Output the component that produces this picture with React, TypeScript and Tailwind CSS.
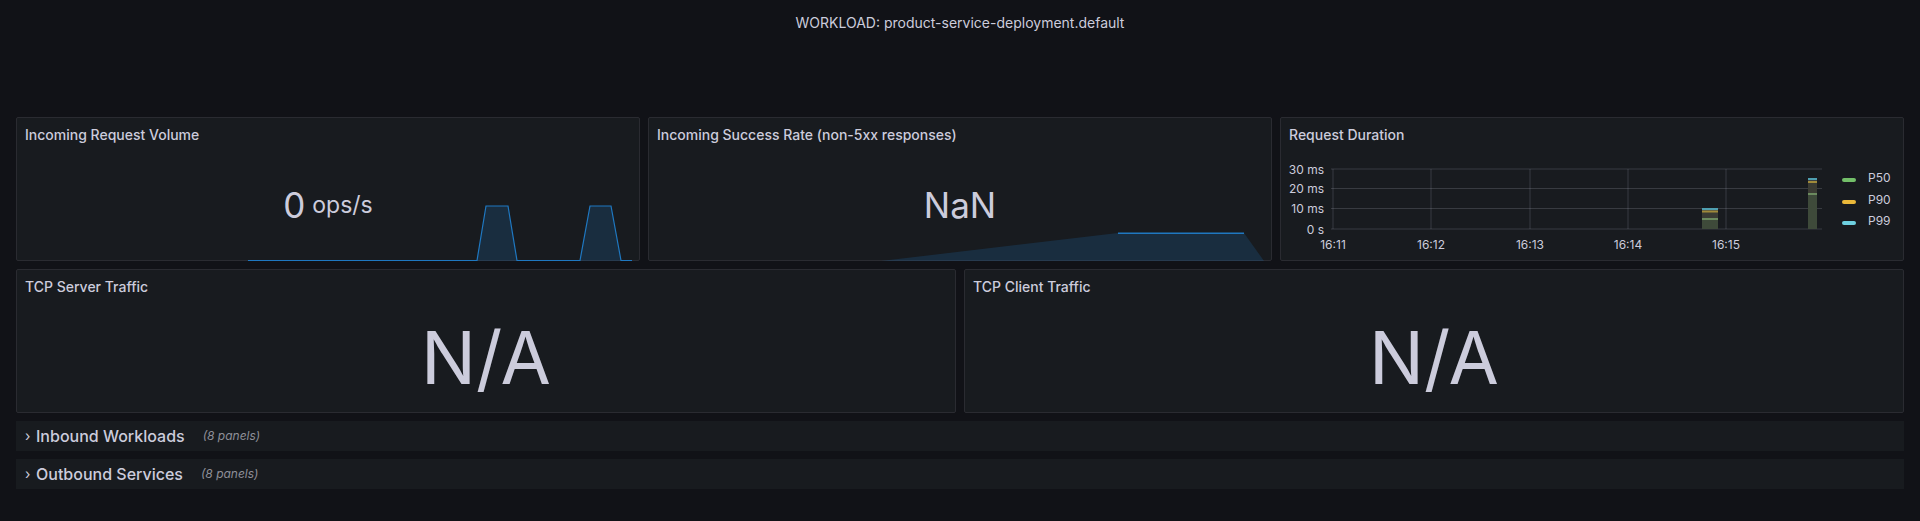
import React from "react";

const TXT = "#ccccdc";

function Panel({ title, className = "", children }: { title: string; className?: string; children?: React.ReactNode }) {
  return (
    <div className={`relative flex flex-col rounded-[2px] border border-[#2a2b31] bg-[#181b1f] ${className}`}>
      <div className="flex h-8 shrink-0 items-center px-2 text-[14px] font-medium text-[#ccccdc]">{title}</div>
      <div className="relative flex-1">{children}</div>
    </div>
  );
}

function Sparkline1() {
  const pts = "231,110.5 460,110.5 469,56 491,56 500,110.5 563,110.5 573,56 594,56 604,110.5 615,110.5";
  return (
    <svg className="absolute left-0 top-0" width={622} height={111} viewBox="0 0 622 111">
      <polygon points={`${pts} 615,111 231,111`} fill="rgba(31,120,193,0.2)" />
      <polyline points={pts} fill="none" stroke="#1f78c1" strokeWidth={1.2} />
    </svg>
  );
}

function Sparkline2() {
  return (
    <svg className="absolute left-0 top-0" width={622} height={111} viewBox="0 0 622 111">
      <polygon points="232,111 469,83 595,83 615,111" fill="rgba(31,120,193,0.2)" />
      <line x1={469} y1={83.3} x2={595} y2={83.3} stroke="#1f78c1" strokeWidth={1.5} />
    </svg>
  );
}

function DurationChart() {
  const ys = [
    { y: 19, l: "30 ms" },
    { y: 38.5, l: "20 ms" },
    { y: 58.5, l: "10 ms" },
    { y: 79, l: "0 s" },
  ];
  const xs = [
    { x: 52, l: "16:11" },
    { x: 150, l: "16:12" },
    { x: 249, l: "16:13" },
    { x: 347, l: "16:14" },
    { x: 445, l: "16:15" },
  ];
  const legend = [
    { y: 30, l: "P50", c: "#73bf69" },
    { y: 52, l: "P90", c: "#eab839" },
    { y: 73, l: "P99", c: "#6ed0e0" },
  ];
  const grid = "rgba(204,204,220,0.18)";
  return (
    <svg className="absolute left-0 top-0" width={622} height={111} viewBox="0 0 622 111" fontFamily="Inter, 'Noto Sans', sans-serif">
      {ys.map((t) => (
        <g key={t.l}>
          <line x1={50} x2={541} y1={t.y} y2={t.y} stroke={grid} strokeWidth={1} />
          <text x={43} y={t.y} textAnchor="end" dominantBaseline="central" fontSize={12} fill={TXT}>
            {t.l}
          </text>
        </g>
      ))}
      {xs.map((t) => (
        <g key={t.l}>
          <line x1={t.x} x2={t.x} y1={19} y2={79} stroke={grid} strokeWidth={1} />
          <text x={t.x} y={94} textAnchor="middle" dominantBaseline="central" fontSize={12} fill={TXT}>
            {t.l}
          </text>
        </g>
      ))}
      {/* bar 1 */}
      <rect x={421} y={58.7} width={16} height={2.3} fill="#3b4143" />
      <rect x={421} y={61} width={16} height={7.7} fill="#3b3c34" />
      <rect x={421} y={68.7} width={16} height={10.3} fill="#3e4a3a" />
      <rect x={421} y={58} width={16} height={2} fill="#4f9fb0" />
      <rect x={421} y={60.5} width={16} height={2} fill="#a08a3a" />
      <rect x={421} y={68} width={16} height={2} fill="#6b8a5e" />
      {/* bar 2 */}
      <rect x={527} y={28.7} width={9} height={3} fill="#3b4143" />
      <rect x={527} y={31.7} width={9} height={12} fill="#3b3c34" />
      <rect x={527} y={43.7} width={9} height={35.3} fill="#3e4a3a" />
      <rect x={527} y={28} width={9} height={2} fill="#4f9fb0" />
      <rect x={527} y={31} width={9} height={2} fill="#a08a3a" />
      <rect x={527} y={43} width={9} height={2} fill="#6b8a5e" />
      {legend.map((g) => (
        <g key={g.l}>
          <rect x={561} y={g.y - 2} width={14} height={4} rx={2} fill={g.c} />
          <text x={587} y={g.y - 3} dominantBaseline="central" fontSize={12} fill={TXT}>
            {g.l}
          </text>
        </g>
      ))}
    </svg>
  );
}

function CollapsedRow({ title }: { title: string }) {
  return (
    <div className="flex h-[30px] items-center bg-[#181b1f] pl-[9px]">
      <span className="w-[11px] text-[14px] leading-none text-[#ccccdc]">›</span>
      <span className="text-[16px] font-medium text-[#ccccdc]">{title}</span>
      <span className="ml-[18px] text-[12px] italic text-[#8e8f98]">(8 panels)</span>
    </div>
  );
}

export default function App() {
  return (
    <div className="h-[521px] w-[1920px] overflow-hidden bg-[#111217] px-4" style={{ fontFamily: "Inter, 'Noto Sans', sans-serif" }}>
      <div className="flex h-[117px] justify-center pt-[13px]">
        <div className="h-5 text-[14px] leading-5 text-[#ccccdc]">WORKLOAD: product-service-deployment.default</div>
      </div>
      <div className="grid h-[144px] grid-cols-3 gap-2">
        <Panel title="Incoming Request Volume">
          <Sparkline1 />
          <div className="relative flex h-full items-center justify-center text-[#ccccdc]">
            <span className="text-[35px] leading-none">0</span>
            <span className="ml-[7px] text-[23px] leading-none">ops/s</span>
          </div>
        </Panel>
        <Panel title="Incoming Success Rate (non-5xx responses)">
          <Sparkline2 />
          <div className="relative flex h-full items-center justify-center text-[35px] leading-none text-[#ccccdc]">NaN</div>
        </Panel>
        <Panel title="Request Duration">
          <DurationChart />
        </Panel>
      </div>
      <div className="mt-2 grid h-[144px] grid-cols-2 gap-2">
        <Panel title="TCP Server Traffic">
          <div className="flex h-full items-center justify-center text-[73px] leading-none text-[#ccccdc]">N/A</div>
        </Panel>
        <Panel title="TCP Client Traffic">
          <div className="flex h-full items-center justify-center text-[73px] leading-none text-[#ccccdc]">N/A</div>
        </Panel>
      </div>
      <div className="mt-2 flex flex-col gap-2">
        <CollapsedRow title="Inbound Workloads" />
        <CollapsedRow title="Outbound Services" />
      </div>
    </div>
  );
}
